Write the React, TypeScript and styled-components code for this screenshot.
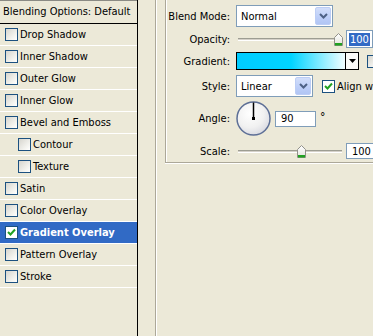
import React from 'react';
import styled, { createGlobalStyle, css } from 'styled-components';

const FONT = `"DejaVu Sans Condensed", "Liberation Sans", sans-serif`;

const GlobalStyle = createGlobalStyle`
  html, body {
    margin: 0;
    padding: 0;
    background: #ece9d8;
  }
  body {
    font-family: ${FONT};
    font-size: 11px;
    color: #000;
  }
`;

const STYLES = [
  { label: 'Drop Shadow' },
  { label: 'Inner Shadow' },
  { label: 'Outer Glow' },
  { label: 'Inner Glow' },
  { label: 'Bevel and Emboss' },
  { label: 'Contour', indent: true },
  { label: 'Texture', indent: true },
  { label: 'Satin' },
  { label: 'Color Overlay' },
  { label: 'Gradient Overlay', checked: true, active: true },
  { label: 'Pattern Overlay' },
  { label: 'Stroke' },
];

const CheckMark = () => (
  <svg width="9" height="9" viewBox="0 0 9 9">
    <path d="M1 4 L3.5 6.5 L8 1.5" fill="none" stroke="#21a121" strokeWidth="2" />
  </svg>
);

const CheckBox: React.FC<{ checked?: boolean }> = ({ checked }) => (
  <Box $checked={checked}>{checked && <CheckMark />}</Box>
);

const Chevron = () => (
  <svg width="9" height="6" viewBox="0 0 9 6">
    <path d="M1 1 L4.5 4.5 L8 1" fill="none" stroke="#4d6185" strokeWidth="2" />
  </svg>
);

const Select: React.FC<{ value: string; width: number }> = ({ value, width }) => (
  <SelectBox $w={width}>
    <SelectText>{value}</SelectText>
    <DropButton>
      <Chevron />
    </DropButton>
  </SelectBox>
);

const Thumb = () => (
  <svg width="9" height="13" viewBox="0 0 9 13">
    <defs>
      <linearGradient id="tg" x1="0" y1="0" x2="0" y2="1">
        <stop offset="0" stopColor="#ffffff" />
        <stop offset="1" stopColor="#e3e3dc" />
      </linearGradient>
    </defs>
    <path d="M0.5 4.5 L4.5 0.5 L8.5 4.5 V12.5 H0.5 Z" fill="url(#tg)" stroke="#92918a" />
    <rect x="1" y="10" width="7" height="2.5" fill="#21a121" />
  </svg>
);

const Slider: React.FC<{ fraction: number }> = ({ fraction }) => (
  <SliderBox>
    <Track />
    <ThumbHolder style={{ left: Math.round(fraction * 100) - 4 }}>
      <Thumb />
    </ThumbHolder>
  </SliderBox>
);

const Dial = () => (
  <svg width="35" height="35" viewBox="0 0 35 35">
    <defs>
      <radialGradient id="dg" cx="0.4" cy="0.35" r="0.7">
        <stop offset="0" stopColor="#ffffff" />
        <stop offset="0.6" stopColor="#f1f1f1" />
        <stop offset="1" stopColor="#d7d8e0" />
      </radialGradient>
    </defs>
    <circle cx="17.5" cy="17.5" r="16.5" fill="url(#dg)" stroke="#5d6f96" strokeWidth="1.5" />
    <line x1="17.5" y1="17.5" x2="17.5" y2="1.5" stroke="#000" strokeWidth="1.5" />
    <rect x="16" y="16" width="3" height="3" fill="#000" />
  </svg>
);

export default function App() {
  return (
    <>
      <GlobalStyle />
      <Window>
        <StylePanel>
          <PanelHeader>Blending Options: Default</PanelHeader>
          {STYLES.map((s) => (
            <StyleRow key={s.label} $indent={s.indent} $active={s.active}>
              <CheckBox checked={s.checked} />
              <span>{s.label}</span>
            </StyleRow>
          ))}
        </StylePanel>

        <Main>
          <OuterGroup>
            <InnerGroup>
              <Row $top={5} $h={22}>
                <Label>Blend Mode:</Label>
                <Select value="Normal" width={97} />
              </Row>
              <Row $top={3} $h={18}>
                <Label>Opacity:</Label>
                <Controls>
                  <Slider fraction={1} />
                  <NumInput $w={27} $h={18}>
                    <Selected>100</Selected>
                  </NumInput>
                </Controls>
              </Row>
              <Row $top={4} $h={18}>
                <Label>Gradient:</Label>
                <Controls $gap={8}>
                  <GradientSwatch>
                    <GradientFill />
                    <SwatchArrow>
                      <svg width="7" height="4" viewBox="0 0 7 4">
                        <path d="M0 0 H7 L3.5 4 Z" fill="#000" />
                      </svg>
                    </SwatchArrow>
                  </GradientSwatch>
                  <Inline>
                    <CheckBox />
                    <span>Reverse</span>
                  </Inline>
                </Controls>
              </Row>
              <Row $top={5} $h={22}>
                <Label>Style:</Label>
                <Controls $gap={9}>
                  <Select value="Linear" width={77} />
                  <Inline>
                    <CheckBox checked />
                    <span>Align with Layer</span>
                  </Inline>
                </Controls>
              </Row>
              <Row $top={4} $h={35}>
                <Label>Angle:</Label>
                <Controls $gap={4}>
                  <Dial />
                  <NumInput $w={41} $h={16} $pad={5}>90</NumInput>
                  <Degree>°</Degree>
                </Controls>
              </Row>
              <Row $top={6} $h={16}>
                <Label>Scale:</Label>
                <Controls>
                  <Slider fraction={0.625} />
                  <NumInput $w={40} $h={16} $pad={5}>100</NumInput>
                </Controls>
              </Row>
            </InnerGroup>
          </OuterGroup>
        </Main>
      </Window>
    </>
  );
}

const Window = styled.div`
  display: flex;
  width: 373px;
  height: 336px;
  overflow: hidden;
  background: #ece9d8;
`;

const StylePanel = styled.div`
  flex: none;
  width: 137px;
  height: 100%;
  border-right: 1px solid #000;
  display: flex;
  flex-direction: column;
`;

const PanelHeader = styled.div`
  height: 22px;
  line-height: 22px;
  padding-left: 3px;
  border-top: 1px solid #8a8a84;
  border-bottom: 1px solid #000;
  white-space: nowrap;
`;

const StyleRow = styled.div<{ $indent?: boolean; $active?: boolean }>`
  height: 21px;
  border-bottom: 1px solid #fff;
  display: flex;
  align-items: center;
  gap: 2px;
  padding-left: ${({ $indent }) => ($indent ? 18 : 5)}px;
  white-space: nowrap;
  ${({ $active }) =>
    $active &&
    css`
      background: #316ac5;
      color: #fff;
      font-weight: bold;
    `}
`;

const Box = styled.div<{ $checked?: boolean }>`
  flex: none;
  box-sizing: border-box;
  width: 13px;
  height: 13px;
  border: 1px solid #1c5180;
  background: ${({ $checked }) =>
    $checked ? '#fff' : 'linear-gradient(135deg, #d6d5ce 0%, #f4f4f0 70%, #fff 100%)'};
  display: flex;
  align-items: center;
  justify-content: center;
`;

const Main = styled.div`
  flex: none;
  width: 300px;
  padding-left: 17px;
`;

const OuterGroup = styled.div`
  height: 100%;
  border-left: 1px solid #aca899;
  box-shadow: inset 1px 0 0 #fff;
  padding-left: 9px;
`;

const InnerGroup = styled.div`
  width: 280px;
  border-left: 1px solid #aca899;
  border-bottom: 1px solid #aca899;
  box-shadow: inset 1px 0 0 #fff, 0 1px 0 #fff;
  padding-bottom: 4px;
  display: flex;
  flex-direction: column;
`;

const Row = styled.div<{ $top: number; $h: number }>`
  display: grid;
  grid-template-columns: 64px 1fr;
  column-gap: 6px;
  align-items: center;
  margin-top: ${({ $top }) => $top}px;
  height: ${({ $h }) => $h}px;
`;

const Label = styled.div`
  text-align: right;
  white-space: nowrap;
`;

const Controls = styled.div<{ $gap?: number }>`
  display: flex;
  align-items: center;
  gap: ${({ $gap }) => $gap ?? 4}px;
`;

const Inline = styled.div`
  display: flex;
  align-items: center;
  gap: 2px;
  white-space: nowrap;
`;

const SelectBox = styled.div<{ $w: number }>`
  box-sizing: border-box;
  width: ${({ $w }) => $w}px;
  height: 22px;
  border: 1px solid #7f9db9;
  background: #fff;
  display: flex;
  align-items: center;
  padding: 1px;
`;

const SelectText = styled.div`
  flex: 1;
  padding-left: 3px;
`;

const DropButton = styled.div`
  flex: none;
  box-sizing: border-box;
  width: 16px;
  height: 18px;
  border: 1px solid #bccdf5;
  border-radius: 2px;
  background: linear-gradient(180deg, #d2defa 0%, #bccef8 60%, #b1c5f4 100%);
  display: flex;
  align-items: center;
  justify-content: center;
`;

const SliderBox = styled.div`
  position: relative;
  width: 104px;
  height: 18px;
  margin-left: 2px;
  display: flex;
  align-items: center;
`;

const Track = styled.div`
  width: 100%;
  height: 1px;
  border-top: 1px solid #9d9d92;
  border-bottom: 1px solid #fff;
  background: #d4d0c8;
`;

const ThumbHolder = styled.div`
  position: absolute;
  top: 3px;
  line-height: 0;
`;

const NumInput = styled.div<{ $w: number; $h: number; $pad?: number }>`
  flex: none;
  box-sizing: border-box;
  width: ${({ $w }) => $w}px;
  height: ${({ $h }) => $h}px;
  border: 1px solid #7f9db9;
  background: #fff;
  padding-left: ${({ $pad }) => $pad ?? 2}px;
  display: flex;
  align-items: center;
`;

const Selected = styled.span`
  background: #316ac5;
  color: #fff;
  padding: 0 1px;
`;

const GradientSwatch = styled.div`
  flex: none;
  box-sizing: border-box;
  width: 123px;
  height: 18px;
  border: 1px solid #000;
  display: flex;
`;

const GradientFill = styled.div`
  flex: 1;
  background: linear-gradient(90deg, #00ccff 0%, #00d4ff 50%, #f2feff 100%);
`;

const SwatchArrow = styled.div`
  flex: none;
  width: 12px;
  border-left: 1px solid #000;
  background: #fbfbf8;
  display: flex;
  align-items: center;
  justify-content: center;
`;

const Degree = styled.span`
  align-self: flex-start;
  margin-top: 9px;
  font-size: 12px;
`;
